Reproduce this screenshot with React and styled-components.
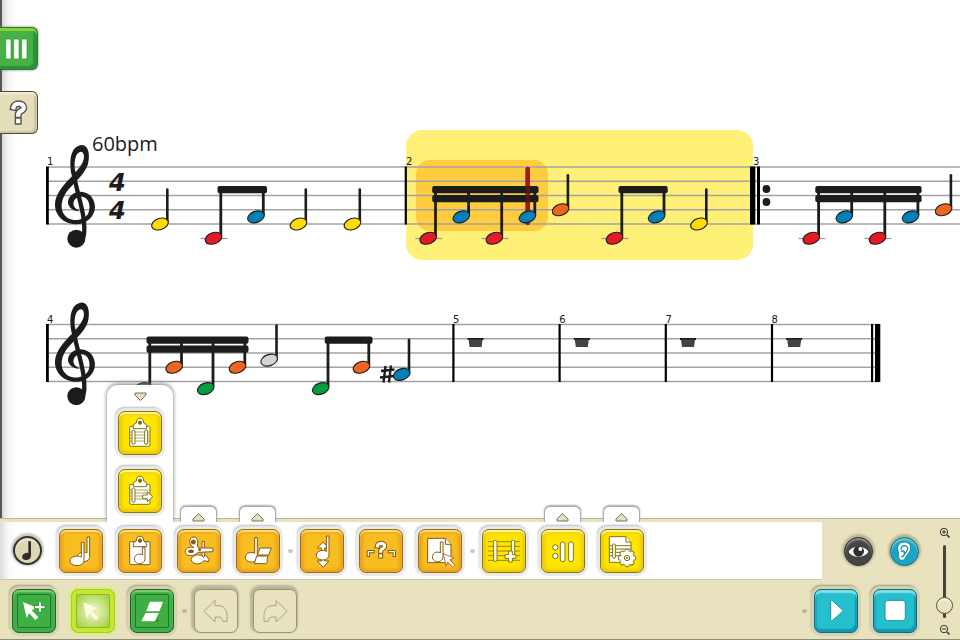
import React, { useState } from "react";
import styled, { createGlobalStyle, css } from "styled-components";

const GlobalStyle = createGlobalStyle`
* {
box-sizing: border-box;
}
body {
margin: 0;
background: #ffffff;
font-family: "DejaVu Sans", sans-serif;
}
`;

const Page = styled.div`
display: flex;
flex-direction: column;
min-height: 100vh;
overflow: hidden;
`;

const Workspace = styled.main`
display: flex;
flex: 1;
background: linear-gradient(to right, #555555 2px, #d9d9d9 2px, #f4f4f4 8px, #ffffff 16px);
`;

const SideTabs = styled.nav`
display: flex;
flex-direction: column;
flex: none;
gap: 21px;
width: 40px;
padding-top: 27px;
`;

const SideTab = styled.button`
display: block;
width: 38px;
height: 43px;
padding: 0;
border: 1px solid ${(props) => (props.$green ? "#2b7a2f" : "#4d4b40")};
border-left: 0;
border-radius: 0 6px 6px 0;
background: ${(props) => (props.$green ? "#47b244" : "#e4dfba")};
box-shadow: ${(props) => props.$green
        ? "inset 0 3px 0 #83cf35, inset -4px -3px 1px #2c9240, 0 0 3px #7a9a7a"
        : "inset 0 2px 1px #f1edd2, inset -3px -2px 1px #cbc6a0"};
cursor: pointer;
`;

const Score = styled.div`
display: flex;
flex-direction: column;
flex: 1;
gap: 8px;
min-width: 0;
padding-top: 120px;
`;

const System = styled.svg`
display: block;
width: 100%;
height: 150px;
overflow: hidden;
`;

const ScoreText = styled.text`
fill: #1c1c1c;
font-family: ${(props) => (props.$tempo ? '"Open Sans", sans-serif' : '"DejaVu Sans", sans-serif')};
font-size: ${(props) => props.$size}px;
font-style: ${(props) => (props.$slanted ? "italic" : "normal")};
font-weight: ${(props) => (props.$slanted ? 700 : 400)};
`;

const Footer = styled.footer`
display: flex;
border-top: 1px solid #b9b6a0;
border-bottom: 1px solid #8f8d7c;
background: #e8e3be;
padding-top: 3px;
`;

const Bars = styled.div`
flex: 1;
min-width: 0;
`;

const BarRow = styled.div`
display: flex;
`;

const NoteBar = styled.div`
display: flex;
flex: 1;
padding-left: 13px;
border-bottom: 1px solid #cdc8ad;
background: linear-gradient(to right, #dcdcdc, #f8f8f8 8px, #ffffff 15px);
`;

const ActionBar = styled.div`
display: flex;
flex: 1;
padding: 9px 12px 6px;
`;

const ViewToggles = styled.div`
display: flex;
align-items: center;
justify-content: center;
gap: 17px;
width: 107px;
padding-left: 12px;
padding-right: 1px;
`;

const Transport = styled.div`
display: flex;
padding: 9px 12px 6px 0;
`;

const Group = styled.div`
display: flex;
gap: 15px;
`;

const Separator = styled.span`
display: flex;
align-items: center;
justify-content: center;
width: 20px;

&::before {
content: "";
width: 5px;
height: 4px;
border-radius: 3px;
background: ${(props) => (props.$onWhite ? "#c9c9c9" : "#bcb798")};
}
`;

const ToolSlot = styled.div`
position: relative;
display: flex;
padding: 7px 0 6px;
`;

const lightHalo = "0 0 1px 3px #e9e9e9, -1px -2px 2px 2px #bdbdbd";
const darkHalo = "0 0 1px 3px #d6d1b0, -1px -2px 2px 2px #9c987e";

const colors = {
    orange: css`
    border-color: #94701c;
    background: #f8bd20;
    box-shadow: inset 0 2px 1px #ffdf72, inset 0 0 3px 3px #eba31d, ${lightHalo};
    `,
    yellow: css`
    border-color: #867812;
    background: #ffe500;
    box-shadow: inset 0 2px 1px #fff79a, inset 0 0 3px 3px #ecc910, ${lightHalo};
    `,
    green: css`
    border-color: #1d6627;
    background: #3fae43;
    box-shadow: inset 0 2px 1px #7ed069, inset 0 0 0 4px #43ad45, inset 0 0 0 5px #1d7433, ${darkHalo};
    `,
    lime: css`
    border-color: #a4cf28;
    background: radial-gradient(#e0edae 20%, #9ccf3c 75%);
    box-shadow: inset 0 0 0 4px #c8e62c, inset 0 0 0 5px #82bb22, 0 0 3px 2px #dceb87;
    `,
    cyan: css`
    border-color: #0f6a80;
    background: #25bfce;
    box-shadow: inset 0 3px 1px #80dfe7, inset -2px -3px 1px #1299b1, inset 2px 0 1px #1ba5bb, ${darkHalo};
    `,
    blank: css`
    border-color: #98957d;
    background: #e8e3be;
    box-shadow: -1px -2px 2px 2px #bab698;
    `,
};

const ToolButton = styled.button`
display: grid;
place-items: center;
flex: none;
width: 44px;
height: 44px;
padding: 0;
border: 1px solid;
border-radius: 7px;
cursor: pointer;
${(props) => colors[props.$color]}

svg {
width: 44px;
height: 44px;
margin: -1px;
}
`;

const roundColors = {
    beige: "#dcd7b3",
    dark: "#454545",
    blue: "#1aa5c4",
};

const RoundButton = styled.button`
display: grid;
place-items: center;
flex: none;
align-self: center;
width: 29px;
height: 29px;
margin-right: ${(props) => (props.$first ? 17 : 0)}px;
padding: 0;
border: ${(props) => (props.$first ? 2 : 1)}px solid ${(props) => (props.$color === "blue" ? "#146e83" : "#333333")};
border-radius: 50%;
background: ${(props) => roundColors[props.$color]};
box-shadow: inset 0 2px 2px rgba(255, 255, 255, 0.45), 0 -1px 2px 2px rgba(80, 75, 50, 0.3);
cursor: pointer;

svg {
width: 29px;
height: 29px;
margin: ${(props) => (props.$first ? -2 : -1)}px;
}
`;

const FlyoutTab = styled.button`
position: absolute;
bottom: 100%;
left: 50%;
display: flex;
align-items: center;
justify-content: center;
width: 37px;
height: 16px;
margin-left: -19px;
padding: 5px 0 0;
border: 1px solid #a9a9a9;
border-bottom: 0;
border-radius: 6px 6px 0 0;
background: #ffffff;
box-shadow: 0 -1px 2px #b0b0b0;
clip-path: inset(-4px -4px 0 -4px);
`;

const Flyout = styled.div`
position: absolute;
bottom: 100%;
left: 50%;
display: flex;
flex-direction: column;
align-items: center;
gap: 14px;
width: 66px;
margin-left: -33px;
padding-bottom: 9px;
border-radius: 11px 11px 0 0;
background: #ffffff;
box-shadow: 0 -1px 4px #777777;
clip-path: inset(-6px -6px 0 -6px);
`;

const FlyoutClose = styled.button`
display: flex;
justify-content: center;
width: 100%;
height: 12px;
padding: 7px 0 0;
border: 0;
background: none;
`;

const ZoomColumn = styled.div`
display: flex;
flex-direction: column;
align-items: center;
width: 31px;
padding: 5px 0 3px;
gap: 6px;
`;

const ZoomButton = styled.button`
display: block;
width: 12px;
height: 12px;
padding: 0;
border: 0;
background: none;
`;

const ZoomSlider = styled.input`
flex: none;
appearance: none;
writing-mode: vertical-lr;
direction: rtl;
width: 17px;
height: 73px;
margin: 0;
background: none;

&::-webkit-slider-runnable-track {
width: 3px;
height: 100%;
border-radius: 2px;
background: #45433a;
}

&::-webkit-slider-thumb {
appearance: none;
width: 17px;
height: 17px;
margin-left: -7px;
border: 1px solid #4d4a3c;
border-radius: 50%;
background: #e8e3be;
box-shadow: inset 0 2px 1px #fbf8e2;
}
`;

/* ---------- score ---------- */

const INK = "#1c1c1c";
const GAP = 14.25;

// head colour follows the position on the staff
const headColors = { 5: "#d3d3d5", 6: "#ee6421", 7: "#0080b8", 8: "#ffdd00", 9: "#009f3c", 10: "#e51b24" };

const Head = ({ x, step }) => (
    <>
        {step === 10 && <path d={`M${x - 13} 71.5h27`} stroke="#999" strokeWidth="1.2" />}
        <ellipse
            cx={x}
            cy={step * GAP / 2}
            rx="8.6"
            ry="5.6"
            transform={`rotate(-20 ${x} ${step * GAP / 2})`}
            fill={headColors[step]}
            stroke={INK}
            strokeWidth="1.1"
        />
    </>
);

const Note = ({ x, step }) => {
    const y = step * GAP / 2;
    return (
        <g>
            <path d={`M${x + 7.3} ${y - 2}V${y - 34.5}`} stroke={INK} strokeWidth="2.6" strokeLinecap="round" />
            <Head x={x} step={step} />
        </g>
    );
};

const Beamed = ({ notes, top, double }) => {
    const first = notes[0][0] + 4;
    const last = notes[notes.length - 1][0] + 11;
    return (
        <g>
            {notes.map(([x, step]) => (
                <path key={x} d={`M${x + 7.3} ${step * GAP / 2 - 2}V${top + 3}`} stroke={INK} strokeWidth="2.8" />
            ))}
            <rect x={first} y={top} width={last - first} height="7.3" rx="2" fill={INK} />
            {double && <rect x={first} y={top + 9} width={last - first} height="7.3" rx="2" fill={INK} />}
            {notes.map(([x, step]) => <Head key={x} x={x} step={step} />)}
        </g>
    );
};

const Bar = ({ x, width = 2.2 }) => <rect x={x} y="-0.5" width={width} height="58" fill="#000" />;

const StaffLines = ({ from, to }) => (
    <g stroke="#a3a3a3" strokeWidth="1.4">
        {[0, 1, 2, 3, 4].map((n) => <line key={n} x1={from} x2={to} y1={n * GAP} y2={n * GAP} />)}
    </g>
);

const Clef = () => (
    <g fill={INK} transform="translate(-40 -167) scale(0.3333)">
        <path d="M214 520C207 480 212 440 244 435C268 434 270 470 264 492C253 527 216 552 197 580C181 605 179 637 202 653C224 667 255 660 265 640C275 615 264 588 240 590C220 592 213 615 230 628L240 634C213 634 200 615 205 600C209 585 225 575 242 575C270 576 285 597 285 622C284 650 260 673 228 673C190 672 164 645 165 612C166 585 185 562 205 540C227 517 252 492 252 470C252 450 233 450 226 475C222 490 224 505 226 520Z" />
        <path d="M219 510C225 555 242 600 250 650C256 695 254 720 236 734" fill="none" stroke={INK} strokeWidth="13" />
        <circle cx="229" cy="716" r="27" />
    </g>
);

const Rest = ({ x }) => (
    <g fill="#444">
        <rect x={x} y="13.5" width="16" height="2" fill={INK} />
        <path d={`M${x + 1} 15h14l-1 7.5h-12z`} />
    </g>
);

const FirstSystem = () => (
    <System role="img" aria-label="Bars 1 to 3">
        <g transform="translate(0 47)">
            <rect x="366" y="-37" width="347" height="130" rx="16" fill="#fff077" />
            <rect x="376" y="-7" width="132" height="71" rx="14" fill="#ffcb3f" />
            <StaffLines from="7" to="2000" />
            <Bar x="6" width="2.8" />
            <Clef />
            <ScoreText x="52" y="-16" $size="20" $tempo>60bpm</ScoreText>
            <ScoreText x="69" y="24" $size="24" $slanted>4</ScoreText>
            <ScoreText x="69" y="52" $size="24" $slanted>4</ScoreText>
            <ScoreText x="7" y="-2" $size="10">1</ScoreText>
            <ScoreText x="366" y="-2" $size="10">2</ScoreText>
            <ScoreText x="713" y="-2" $size="10">3</ScoreText>
            <Note x={120} step={8} />
            <Beamed notes={[[173.5, 10], [216, 7]]} top={19} />
            <Note x={258.5} step={8} />
            <Note x={312.5} step={8} />
            <Bar x="364.7" />
            <path d="M487.7 2V56" stroke="#9d1c12" strokeWidth="4.6" strokeLinecap="round" />
            <Beamed notes={[[388.2, 10], [421.3, 7], [454.4, 10], [487.5, 7]]} top={19} double />
            <path d="M487.700 2V42" stroke="#9d1c12" strokeWidth="4.600" strokeLinecap="round" opacity="0.350" />
            <Note x={520.6} step={6} />
            <Beamed notes={[[574.5, 10], [616.7, 7]]} top={19} />
            <Note x={659} step={8} />
            <Bar x="710" width="5.3" />
            <Bar x="717" width="3" />
            <circle cx="726.4" cy="22" r="3.9" fill={INK} />
            <circle cx="726.4" cy="35" r="3.9" fill={INK} />
            <Beamed notes={[[771.3, 10], [804.4, 7], [837.5, 10], [870.6, 7]]} top={19} double />
            <Note x={903.6} step={6} />
        </g>
    </System>
);

const SecondSystem = () => (
    <System role="img" aria-label="Bars 4 to 8">
        <g transform="translate(0 46.5)">
            <StaffLines from="7" to="839" />
            <Bar x="6" width="2.8" />
            <Clef />
            <ScoreText x="7" y="-2" $size="10">4</ScoreText>
            <Beamed notes={[[102.5, 9], [134.2, 6], [165.7, 9], [197.5, 6]]} top={12} double />
            <Note x={229.2} step={5} />
            <Beamed notes={[[280.7, 9], [321.5, 6]]} top={12} />
            <path d="M345.5 41.5L343.5 58M351 41L349 58M341 46.5L354.5 45M340 53L354 51.5" stroke={INK} strokeWidth="2.4" />
            <Note x={361.7} step={7} />
            {[5, 6, 7, 8].map((bar, i) => (
                <g key={bar}>
                    <Bar x={412.3 + i * 106.2} />
                    <ScoreText x={413 + i * 106.2} y="-2" $size="10">{bar}</ScoreText>
                    <Rest x={427.6 + i * 106.2} />
                </g>
            ))}
            <Bar x="831" />
            <Bar x="835" width="5.3" />
        </g>
    </System>
);

/* ---------- icons, all on a 132 grid ---------- */

const BROWN = "#86590f";
const OLIVE = "#85750f";

const Icon = ({ children, line = BROWN, size = 132 }) => (
    <svg viewBox={`0 0 ${size} ${size}`} fill="#fff" stroke={line} strokeWidth="3" strokeLinejoin="round" aria-hidden="true">
        {children}
    </svg>
);

// white line with a thin darker contour
const Contour = ({ d, width = 7, line = BROWN }) => (
    <g fill="none" strokeLinecap="square">
        <path d={d} stroke={line} strokeWidth={width + 6} />
        <path d={d} stroke="#fff" strokeWidth={width} />
    </g>
);

const Question = ({ x, y, line = BROWN }) => (
    <g transform={`translate(${x} ${y})`}>
        <Contour d="M-11 -11C-9 -21 11 -21 11 -10C11 -2 -1 -4 -1 5M-1 18V19" width={9} line={line} />
    </g>
);

const SmallNote = ({ x, y, top, rx = 18 }) => (
    <path d={`M${x + rx - 6} ${top}h8V${y}C${x + rx + 2} ${y + 22} ${x - rx} ${y + 20} ${x - rx} ${y + 2}C${x - rx} ${y - 12} ${x + 2} ${y - 16} ${x + rx - 6} ${y - 10}Z`} />
);

const Clip = () => (
    <>
        <path d="M46 53V44Q47 38 55 36C53 17 79 17 77 36Q85 38 86 44V53Z" />
        <circle cx="66" cy="35" r="5" fill={BROWN} />
    </>
);

const cursor = "M0 0L42 17L26 25L46 46L37 54L18 33L11 49Z";

const icons = {
    notes: (
        <Icon>
            <SmallNote x={73} y={82} top={24} rx={17} />
            <SmallNote x={53} y={94} top={40} rx={20} />
        </Icon>
    ),
    paste: (
        <Icon>
            <rect x="35" y="38" width="61" height="69" rx="3" />
            <Clip />
            <SmallNote x={64} y={88} top={56} rx={15} />
        </Icon>
    ),
    cut: (
        <Icon>
            <path d="M75 37h7v50h-7z" />
            <path d="M42 92C46 77 69 72 80 85L85 77L96 91L94 98L80 95C75 108 46 109 42 92Z" />
            <path d="M48 24C61 23 65 38 61 48L64 57H108V68L64 70L53 78C37 83 24 78 25 67C27 54 43 53 51 56C35 48 34 27 48 24Z" />
            <ellipse cx="49" cy="39" rx="6" ry="6" fill={BROWN} />
            <ellipse cx="42" cy="67" rx="8" ry="4" fill={BROWN} />
            <circle cx="68" cy="62" r="3" fill={BROWN} />
        </Icon>
    ),
    eraseNote: (
        <Icon>
            <SmallNote x={45} y={83} top={26} rx={17} />
            <path d="M72 57H106L98 78H64ZM62 81H96L93 92Q96 99 91 104H55Z" />
        </Icon>
    ),
    transpose: (
        <Icon>
            <path d="M69 39L86 57H74V64H64V57H52ZM64 88H74V96H87L70 115L51 96H64Z" />
            <SmallNote x={67} y={77} top={21} />
        </Icon>
    ),
    unknown: (
        <Icon>
            <Contour d="M28 79V68H42M91 68H106V79" width={4} />
            <Question x={66} y={62} />
        </Icon>
    ),
    selectPage: (
        <Icon>
            <path d="M29 28H82L99 46V101H29Z" />
            <path d="M82 28V46H99" />
            <SmallNote x={58} y={82} top={39} rx={15} />
            <path d={cursor} transform="translate(76 74) scale(0.75)" />
        </Icon>
    ),
    addBar: (
        <Icon line={OLIVE}>
            <path d="M18 38H114M18 52H114M18 66H114M18 80H114M18 94H114" strokeWidth="2.5" />
            <rect x="35" y="34" width="10" height="63" rx="4" />
            <rect x="88" y="34" width="10" height="55" rx="4" />
            <path d="M80 66H91V77H102V88H91V99H80V88H69V77H80Z" />
        </Icon>
    ),
    repeat: (
        <Icon line={OLIVE}>
            <circle cx="43" cy="55" r="8" />
            <circle cx="43" cy="81" r="8" />
            <rect x="58" y="39" width="14" height="59" rx="6" />
            <rect x="83" y="39" width="14" height="59" rx="6" />
        </Icon>
    ),
    pageSettings: (
        <Icon line={OLIVE}>
            <path d="M28 23H78L93 39V100H28Z" />
            <path d="M78 23V39H93M28 50H93M28 60H93M28 70H93M28 80H93" />
            <rect x="38" y="45" width="8" height="43" rx="3" />
            {[0, 45, 90, 135, 180, 225, 270, 315].map((turn) => (
                <rect key={turn} x="75" y="61" width="12" height="12" rx="3" transform={`rotate(${turn} 81 87)`} />
            ))}
            <circle cx="81" cy="87" r="20" stroke="none" />
            <circle cx="81" cy="87" r="8" />
            <circle cx="81" cy="87" r="2" />
        </Icon>
    ),
    pasteBars: (
        <Icon line={OLIVE}>
            <rect x="35" y="46" width="61" height="60" rx="4" />
            <Clip />
            <path d="M36 63H95M36 72H95M36 81H95M36 90H95" strokeWidth="2" />
            <rect x="42" y="57" width="9" height="43" rx="4" />
            <rect x="80" y="57" width="9" height="43" rx="4" />
        </Icon>
    ),
    pasteInsert: (
        <Icon line={OLIVE}>
            <rect x="35" y="46" width="61" height="60" rx="4" />
            <Clip />
            <path d="M36 63H95M36 72H95M36 81H95M36 90H95" strokeWidth="2" />
            <rect x="42" y="57" width="9" height="43" rx="4" />
            <path d="M74 78H88V68L104 83L88 98V89H74Z" />
        </Icon>
    ),
    selectAdd: (
        <Icon line="none">
            <path d={cursor} transform="translate(33 39)" />
            <path d="M79 38H88V50H99V59H88V70H79V59H67V50H79Z" stroke="#2f9a3a" />
        </Icon>
    ),
    select: (
        <Icon line="none">
            <path d={cursor} transform="translate(37 40)" fill="#fffbdc" />
        </Icon>
    ),
    eraser: (
        <Icon line="none">
            <path d="M63 38H96Q100 38 98 43L88 67H49L58 42Q59 38 63 38ZM47 72H86L77 92Q75 97 70 97H39Q34 97 36 92Z" />
            <path d="M83 88L87 98H77Z" fill="#238434" />
        </Icon>
    ),
    undo: (
        <Icon line="#a5a188">
            <path d="M63 34L30 67L63 99V84H72Q86 84 86 97H99V80C99 60 88 50 72 50H63Z" fill="#e9e5c2" />
        </Icon>
    ),
    redo: (
        <Icon line="#a5a188">
            <path d="M69 34L102 67L69 99V84H60Q46 84 46 97H33V80C33 60 44 50 60 50H69Z" fill="#e9e5c2" />
        </Icon>
    ),
    play: (
        <Icon line="#1690a2">
            <path d="M50 35Q52 33 55 35L86 63Q88 65 86 67L55 95Q52 97 50 95Z" />
        </Icon>
    ),
    stop: (
        <Icon line="#1690a2">
            <rect x="36" y="34" width="61" height="61" rx="8" />
        </Icon>
    ),
    quarter: (
        <Icon line="none" size={87}>
            <path d="M46 16H54V57C54 70 46 72 39 72C22 72 26 52 39 51Q43 50 46 51Z" fill="#2b2b2b" />
        </Icon>
    ),
    eye: (
        <Icon line="none" size={87}>
            <path d="M14 44C24 24 62 24 73 44C62 64 24 64 14 44Z" />
            <circle cx="44" cy="43" r="16" fill="#2e2e2e" />
            <circle cx="49" cy="36" r="6" />
        </Icon>
    ),
    ear: (
        <Icon line="#1688a5" size={87}>
            <path d="M24 42C19 25 30 15 44 15C58 16 65 27 61 39C58 48 52 51 48 60C43 71 33 73 28 66C24 60 28 52 24 42Z" />
            <path d="M33 38C33 22 54 22 53 36C52 45 45 46 42 54C40 59 36 60 34 57M33 44C41 38 46 43 41 50" fill="none" strokeWidth="4" />
        </Icon>
    ),
};

const Triangle = ({ down }) => (
    <svg width="13" height="9" viewBox="0 0 13 9" aria-hidden="true">
        <path d={down ? "M1 1H12V3L6.5 8.5L1 3Z" : "M1 8H12V6L6.5 .5L1 6Z"} fill="#e4dfba" stroke="#77735c" />
    </svg>
);

const Magnifier = ({ plus }) => (
    <svg width="12" height="12" viewBox="0 0 12 12" fill="none" stroke="#333" aria-hidden="true">
        <circle cx="5" cy="5" r="3.7" />
        <path d={plus ? "M3 5H7M5 3V7" : "M3 5H7"} />
        <path d="M8 8L10.5 10.5" strokeWidth="1.6" />
    </svg>
);

/* ---------- toolbars ---------- */

const noteTools = [
    [
        { label: "Notes", icon: "notes", color: "orange" },
        { label: "Paste", icon: "paste", color: "orange", open: true },
        { label: "Cut", icon: "cut", color: "orange", more: true },
        { label: "Erase note", icon: "eraseNote", color: "orange", more: true },
    ],
    [
        { label: "Transpose", icon: "transpose", color: "orange" },
        { label: "Mystery notes", icon: "unknown", color: "orange" },
        { label: "Select notes", icon: "selectPage", color: "orange" },
    ],
    [
        { label: "Add bar", icon: "addBar", color: "yellow" },
        { label: "Repeat", icon: "repeat", color: "yellow", more: true },
        { label: "Page settings", icon: "pageSettings", color: "yellow", more: true },
    ],
];

const Tool = ({ label, icon, color }) => (
    <ToolButton type="button" aria-label={label} title={label} $color={color}>{icons[icon]}</ToolButton>
);

const PasteFlyout = () => (
    <Flyout>
        <FlyoutClose type="button" aria-label="Close paste menu"><Triangle down /></FlyoutClose>
        <Tool label="Paste bars" icon="pasteBars" color="yellow" />
        <Tool label="Insert bars" icon="pasteInsert" color="yellow" />
    </Flyout>
);

const App = () => {
    const [zoom, setZoom] = useState(8);

    return (
        <Page>
            <GlobalStyle />
            <Workspace>
                <SideTabs>
                    <SideTab type="button" aria-label="Menu" $green>
                        <svg width="37" height="41" viewBox="0 0 111 123" aria-hidden="true">
                            <g fill="#fff" stroke="#2c8b38" strokeWidth="2">
                                <rect x="17" y="33" width="16" height="60" rx="3" />
                                <rect x="41" y="33" width="16" height="60" rx="3" />
                                <rect x="65" y="33" width="16" height="60" rx="3" />
                            </g>
                        </svg>
                    </SideTab>
                    <SideTab type="button" aria-label="Help">
                        <svg width="37" height="41" viewBox="0 0 111 123" aria-hidden="true">
                            <g transform="translate(56 61) scale(1.4)">
                                <Question x={0} y={0} line="#55534a" />
                            </g>
                        </svg>
                    </SideTab>
                </SideTabs>
                <Score>
                    <FirstSystem />
                    <SecondSystem />
                </Score>
            </Workspace>
            <Footer>
                <Bars>
                    <BarRow>
                        <NoteBar>
                            <RoundButton type="button" aria-label="Note value" $color="beige" $first>{icons.quarter}</RoundButton>
                            {noteTools.map((group, i) => (
                                <React.Fragment key={group[0].label}>
                                    {i > 0 && <Separator $onWhite />}
                                    <Group>
                                        {group.map((tool) => (
                                            <ToolSlot key={tool.label}>
                                                <Tool {...tool} />
                                                {tool.open && <PasteFlyout />}
                                                {tool.more && (
                                                    <FlyoutTab type="button" aria-label={`More: ${tool.label}`}>
                                                        <Triangle />
                                                    </FlyoutTab>
                                                )}
                                            </ToolSlot>
                                        ))}
                                    </Group>
                                </React.Fragment>
                            ))}
                        </NoteBar>
                        <ViewToggles>
                            <RoundButton type="button" aria-label="Show notes" $color="dark">{icons.eye}</RoundButton>
                            <RoundButton type="button" aria-label="Listen" $color="blue">{icons.ear}</RoundButton>
                        </ViewToggles>
                    </BarRow>
                    <BarRow>
                        <ActionBar>
                            <Group>
                                <Tool label="Add to selection" icon="selectAdd" color="green" />
                                <Tool label="Select" icon="select" color="lime" />
                                <Tool label="Eraser" icon="eraser" color="green" />
                            </Group>
                            <Separator />
                            <Group>
                                <Tool label="Undo" icon="undo" color="blank" />
                                <Tool label="Redo" icon="redo" color="blank" />
                            </Group>
                        </ActionBar>
                        <Transport>
                            <Separator />
                            <Group>
                                <Tool label="Play" icon="play" color="cyan" />
                                <Tool label="Stop" icon="stop" color="cyan" />
                            </Group>
                        </Transport>
                    </BarRow>
                </Bars>
                <ZoomColumn>
                    <ZoomButton type="button" aria-label="Zoom in" onClick={() => setZoom(Math.min(100, zoom + 10))}>
                        <Magnifier plus />
                    </ZoomButton>
                    <ZoomSlider
                        type="range"
                        aria-label="Zoom"
                        min="0"
                        max="100"
                        value={zoom}
                        onChange={(e) => setZoom(Number(e.target.value))}
                    />
                    <ZoomButton type="button" aria-label="Zoom out" onClick={() => setZoom(Math.max(0, zoom - 10))}>
                        <Magnifier />
                    </ZoomButton>
                </ZoomColumn>
            </Footer>
        </Page>
    );
};

export default App;
